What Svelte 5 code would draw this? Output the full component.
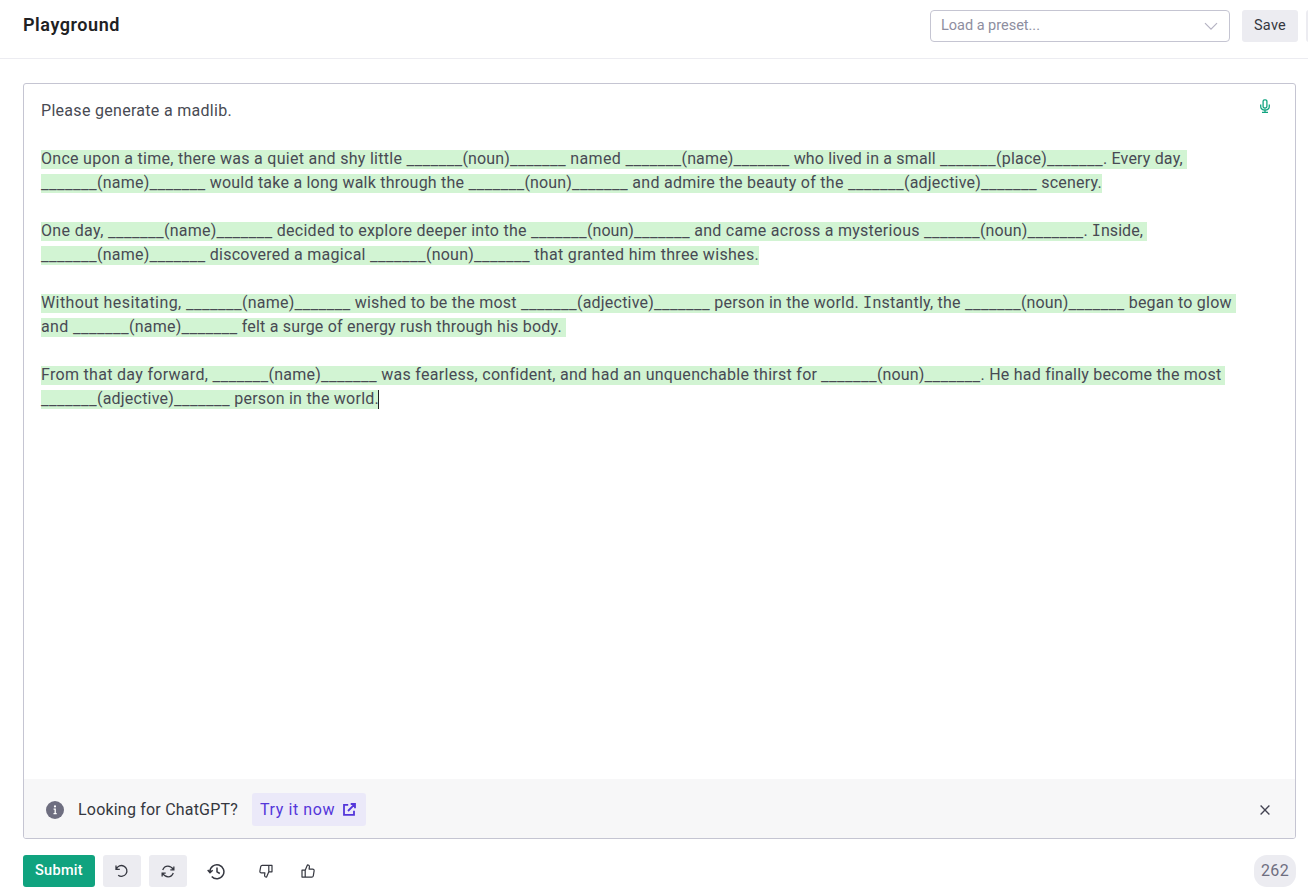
<script>
  const B = '_______';
  // Each run is [text, right edge]; lines start at x = 0 of the editor text.
  const first = [[['Please generate a madlib.', 191]]];
  const paragraphs = [
    [
      [['Once upon a time, there was a quiet and shy little ', 365.5], [B, 421.5], ['(noun)', 469], [B, 525], [' named ', 584.5], [B, 640.5], ['(name)', 692.5], [B, 748.5], [' who lived in a small ', 899], [B, 955], ['(place)', 1006], [B, 1062], ['. Every day, ', 1146]],
      [[B, 56], ['(name)', 108.5], [B, 164.5], [' would take a long walk through the ', 427.5], [B, 483.5], ['(noun)', 531], [B, 587], [' and admire the beauty of the ', 807], [B, 863], ['(adjective)', 940], [B, 996], [' scenery.', 1061]]
    ],
    [
      [['One day, ', 67], [B, 123], ['(name)', 175.5], [B, 231.5], [' decided to explore deeper into the ', 490], [B, 546], ['(noun)', 593], [B, 649], [' and came across a mysterious ', 883], [B, 939], ['(noun)', 986.5], [B, 1042.5], ['. Inside, ', 1106]],
      [[B, 56], ['(name)', 108.5], [B, 164.5], [' discovered a magical ', 329], [B, 385], ['(noun)', 433], [B, 489], [' that granted him three wishes.', 718]]
    ],
    [
      [['Without hesitating, ', 145], [B, 201], ['(name)', 253.5], [B, 309.5], [' wished to be the most ', 480], [B, 536], ['(adjective)', 613], [B, 669], [' person in the world. Instantly, the ', 924], [B, 980], ['(noun)', 1027.5], [B, 1083.5], [' began to glow ', 1195]],
      [['and ', 32], [B, 88], ['(name)', 140.5], [B, 196.5], [' felt a surge of energy rush through his body. ', 525]]
    ],
    [
      [['From that day forward, ', 171.5], [B, 227.5], ['(name)', 280], [B, 336], [' was fearless, confident, and had an unquenchable thirst for ', 780], [B, 836], ['(noun)', 883.5], [B, 939.5], ['. He had finally become the most ', 1184]],
      [[B, 56], ['(adjective)', 133], [B, 189], [' person in the world.', 338]]
    ]
  ];

  // Spread the letters so that the run fills the width it is given.
  function fit(node, width) {
    node.style.width = 'auto';
    const natural = node.getBoundingClientRect().width;
    node.style.letterSpacing = (width - natural) / node.textContent.length + 'px';
    node.style.width = width + 'px';
  }
</script>

{#snippet line(runs)}
  {#each runs as run, i}
    <span class="run" class:blank={run[0] === B} use:fit={run[1] - (i ? runs[i - 1][1] : 0)}>{#each run[0].split(/(I)/) as part}{#if part === 'I'}<span class="slab">I</span>{:else}{part}{/if}{/each}</span>
  {/each}
{/snippet}

<div class="page">
  <header>
    <h1><span class="run" use:fit={97}>Playground</span></h1>
    <div class="tools">
      <div class="select">
        <span class="run" use:fit={99}>Load a preset...</span>
        <svg width="14" height="9" viewBox="0 0 14 9" fill="none" stroke="#b5b3c3" stroke-width="1.2"><path d="M1 1.2l6 6 6-6" /></svg>
      </div>
      <button class="btn save"><span class="run" use:fit={32}>Save</span></button>
      <button class="btn next" aria-label="More"></button>
    </div>
  </header>

  <main>
    <section class="editor">
      <div class="text">
        <div class="copy">
          <div class="line"><div class="plain">{@render line(first[0])}</div></div>
          {#each paragraphs as lines, p}
            <div class="para">
              {#each lines as runs, l}
                <div class="line"><div class="mark">{@render line(runs)}</div>{#if p === 3 && l === 1}<i class="caret"></i>{/if}</div>
              {/each}
            </div>
          {/each}
        </div>
        <svg width="10" height="15" viewBox="0 0 10 15" fill="none" stroke="#10a37f" stroke-width="1.3">
          <rect x="3.1" y=".8" width="3.8" height="8.2" rx="1.5" />
          <path d="M.7 5.6v1.6c0 2.4 1.7 3.8 4.3 3.8s4.3-1.4 4.3-3.8V5.6M5 11v2.4M2 13.4h6" />
        </svg>
      </div>
      <div class="banner">
        <svg class="info" width="18" height="18" viewBox="0 0 18 18"><circle cx="9" cy="9" r="9" fill="#6e6e80" /><circle cx="9" cy="5.4" r="1.1" fill="#fff" /><path d="M7.6 8.2h1.6v4.3M7.5 12.7h3.2" fill="none" stroke="#fff" stroke-width="1.3" /></svg>
        <span class="ask"><span class="run" use:fit={160}>Looking for ChatGPT?</span></span>
        <button class="try"><span class="run" use:fit={75}>Try it now</span>
          <svg width="13" height="13" viewBox="0 0 13 13" fill="none" stroke="#5436da" stroke-width="1.8"><path d="M5.2 1.9H1v10h10V7.8M7.7 1H12v4.3M11.8 1.2L5 8" /></svg>
        </button>
        <svg class="close" width="10" height="10" viewBox="0 0 10 10" stroke="#444453" stroke-width="1.35"><path d="M.6.6l8.8 8.8M9.4.6L.6 9.4" /></svg>
      </div>
    </section>

    <footer>
      <button class="btn submit"><span class="run" use:fit={48}>Submit</span></button>
      <button class="btn sq" aria-label="Undo">
        <svg width="14" height="14" viewBox="0 0 14 14" fill="none" stroke="#353740" stroke-width="1.3"><path d="M1 1.6v3.7h3.8M1.4 5.1A5.4 5.4 0 1 1 3.2 11.2" /></svg>
      </button>
      <button class="btn sq" aria-label="Regenerate">
        <svg width="14" height="13" viewBox="0 0 15 14" fill="none" stroke="#353740" stroke-width="1.4"><path d="M13.8 1.5v3.7H10M1.2 12.5V8.8H5M1.8 5.4C2.8 2.8 4.9 1.3 7.4 1.3c2.4 0 4 1 6.2 3.7M13.2 8.6c-1 2.6-3.2 4.1-5.6 4.1-2.4 0-4-1-6.2-3.7" /></svg>
      </button>
      <button class="icon hist" aria-label="History">
        <svg width="18" height="17" viewBox="0 0 18 17" fill="none" stroke="#353740" stroke-width="1.5"><path d="M2.9 8.6a7 7 0 1 1 1.8 4.8M.7 7.1l2.3 2.5 2.7-2.4M10 4.4v4.4l2.8 1.7" /></svg>
      </button>
      <button class="icon" aria-label="Thumbs down">
        <svg class="down" width="14" height="14" viewBox="0 0 14 14" fill="none" stroke="#353740" stroke-width="1.2" stroke-linejoin="round"><path d="M4.2 6.2L6.4.9c1.4 0 2.2.8 2 2l-.3 2.3h3.6c1 0 1.6.7 1.4 1.7l-.8 4.4c-.2.8-.7 1.3-1.5 1.3H4.2M1 6.2h3.2v6.4H1z" /></svg>
      </button>
      <button class="icon" aria-label="Thumbs up">
        <svg width="14" height="14" viewBox="0 0 14 14" fill="none" stroke="#353740" stroke-width="1.2" stroke-linejoin="round"><path d="M4.2 6.2L6.4.9c1.4 0 2.2.8 2 2l-.3 2.3h3.6c1 0 1.6.7 1.4 1.7l-.8 4.9c-.2.8-.7 1.3-1.5 1.3H4.2M1 6.2h3.2v6.9H1z" /></svg>
      </button>
      <span class="count"><span class="run" use:fit={28}>262</span></span>
    </footer>
  </main>
</div>

<style>
  :global(body) { margin: 0; overflow: hidden; background: #fff; }
  .page { width: 1308px; height: 894px; overflow: hidden; display: flex; flex-direction: column; box-sizing: border-box; font: 16px/19px Roboto, sans-serif; color: #353740; }
  .page * { box-sizing: border-box; }
  button { font: inherit; color: inherit; border: 0; padding: 0; margin: 0; background: none; }
  svg { display: block; flex: none; }
  .run { display: inline-block; white-space: pre; flex: none; }
  .blank { font-size: 17px; }
  .slab { font-family: "DejaVu Sans Mono", monospace; font-size: 15px; line-height: 1; }

  header { height: 59px; flex: none; border-bottom: 1px solid #ececf1; display: flex; justify-content: space-between; padding: 10px 0 0 23px; }
  h1 { margin: 3px 0 0; font-size: 18px; line-height: 24px; font-weight: 600; color: #202123; }
  .tools { display: flex; gap: 12px; width: 378px; overflow: hidden; }
  .select { width: 300px; height: 32px; flex: none; border: 1px solid #c5c5d2; border-radius: 4px; padding: 0 11px 0 10px; display: flex; align-items: center; justify-content: space-between; font-size: 14.5px; color: #8e8ea0; }
  .select .run { margin-top: -2px; }
  .select svg { margin-top: 1px; }
  .btn { height: 32px; flex: none; border-radius: 3px; background: #ececf1; display: flex; align-items: center; justify-content: center; font-size: 14.5px; }
  .save { width: 56px; padding-bottom: 2px; }
  .next { width: 40px; margin-left: -4px; }

  main { display: flex; flex-direction: column; padding: 24px 12px 0 23px; }
  .editor { height: 756px; border: 1px solid #c5c5d2; border-radius: 3px; display: flex; flex-direction: column; overflow: hidden; }
  .text { flex: 1; display: flex; justify-content: space-between; padding: 15px 25px 0 17px; }
  .copy { color: #484a53; }
  .para { margin-top: 24px; }
  .line { height: 24px; display: flex; padding-top: 3px; }
  .mark, .plain { display: flex; height: 19px; line-height: 18px; }
  .mark { background: #d2f4d3; }
  .caret { width: 1px; height: 19px; margin-left: -1px; background: #202123; }
  .banner { height: 59px; flex: none; background: #f7f7f8; display: flex; align-items: center; padding: 1px 25px 0 22px; }
  .info, .close { margin-top: 2px; }
  .ask { margin-left: 14px; }
  .try { margin-left: 14px; width: 114px; height: 33px; border-radius: 3px; background: #ebe9f9; color: #5436da; display: flex; align-items: center; gap: 8px; padding-left: 8px; }
  .close { margin-left: auto; }

  footer { display: flex; height: 32px; margin-top: 16px; align-items: center; }
  .submit { width: 72px; background: #10a37f; color: #fff; font-weight: 500; padding-bottom: 2px; }
  .sq { width: 38px; margin-left: 8px; }
  .icon { display: flex; width: 14px; margin-left: 28px; }
  .hist { width: 18px; margin-left: 20px; margin-right: 6px; }
  .down { transform: rotate(180deg); }
  .count { margin-left: auto; width: 42px; height: 32px; border-radius: 13px; background: #ececf1; display: flex; align-items: center; justify-content: center; color: #6e6e80; padding-bottom: 1px; }
</style>
